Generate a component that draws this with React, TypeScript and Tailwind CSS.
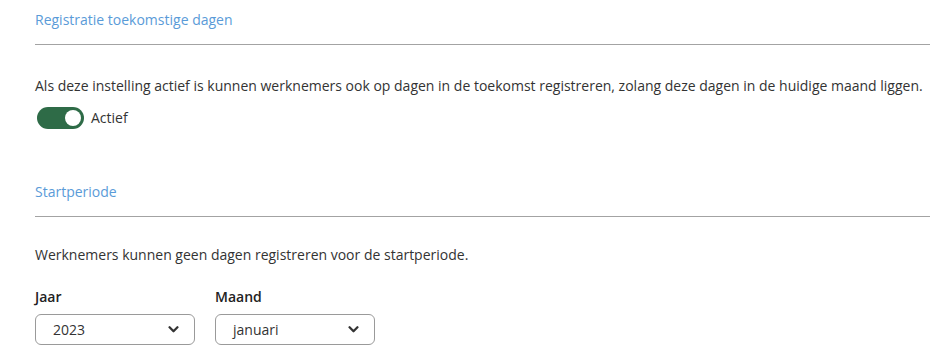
import React from "react";

function Chevron() {
  return (
    <svg width="11" height="7" viewBox="0 0 12 8" fill="none" className="text-[#333]">
      <path d="M1.5 1.5L6 6l4.5-4.5" stroke="currentColor" strokeWidth="2.6" strokeLinecap="round" strokeLinejoin="round" />
    </svg>
  );
}

function Select({ label, value }: { label: string; value: string }) {
  return (
    <div className="flex flex-col">
      <label className="text-[14px] leading-5 font-semibold text-[#222]">{label}</label>
      <button className="mt-[7px] w-[160px] h-[31px] flex items-center justify-between pl-[17px] pr-[15px] border border-[#9a9a9a] rounded-[6px] bg-white text-[14px] text-[#333]">
        <span>{value}</span>
        <Chevron />
      </button>
    </div>
  );
}

export default function App() {
  const [active, setActive] = React.useState(true);

  return (
    <div className="min-h-screen bg-white pl-[35px] pt-[10px] text-[#333]" style={{ fontFamily: '"Open Sans", sans-serif' }}>
      <h2 className="text-[14px] leading-5 text-[#5a9bd8] pb-[14px] border-b border-[#a3a3a3]">
        Registratie toekomstige dagen
      </h2>
      <p className="mt-[31px] text-[14px] leading-5">
        Als deze instelling actief is kunnen werknemers ook op dagen in de toekomst registreren, zolang deze dagen in de huidige maand liggen.
      </p>
      <label className="mt-[11px] ml-[2px] flex items-center gap-[7px] w-fit cursor-pointer">
        <button
          onClick={() => setActive(!active)}
          className={
            "w-[47px] h-[22px] rounded-full flex items-center px-[3px] " +
            (active ? "bg-[#2e6b47] justify-end" : "bg-gray-300 justify-start")
          }
        >
          <span className="w-[16px] h-[16px] rounded-full bg-white block" />
        </button>
        <span className="text-[14px] leading-5">Actief</span>
      </label>

      <h2 className="mt-[53px] text-[14px] leading-5 text-[#5a9bd8] pb-[14px] border-b border-[#a3a3a3]">
        Startperiode
      </h2>
      <p className="mt-[28px] text-[14px] leading-5">
        Werknemers kunnen geen dagen registreren voor de startperiode.
      </p>
      <div className="mt-[22px] flex gap-[20px]">
        <Select label="Jaar" value="2023" />
        <Select label="Maand" value="januari" />
      </div>
    </div>
  );
}
